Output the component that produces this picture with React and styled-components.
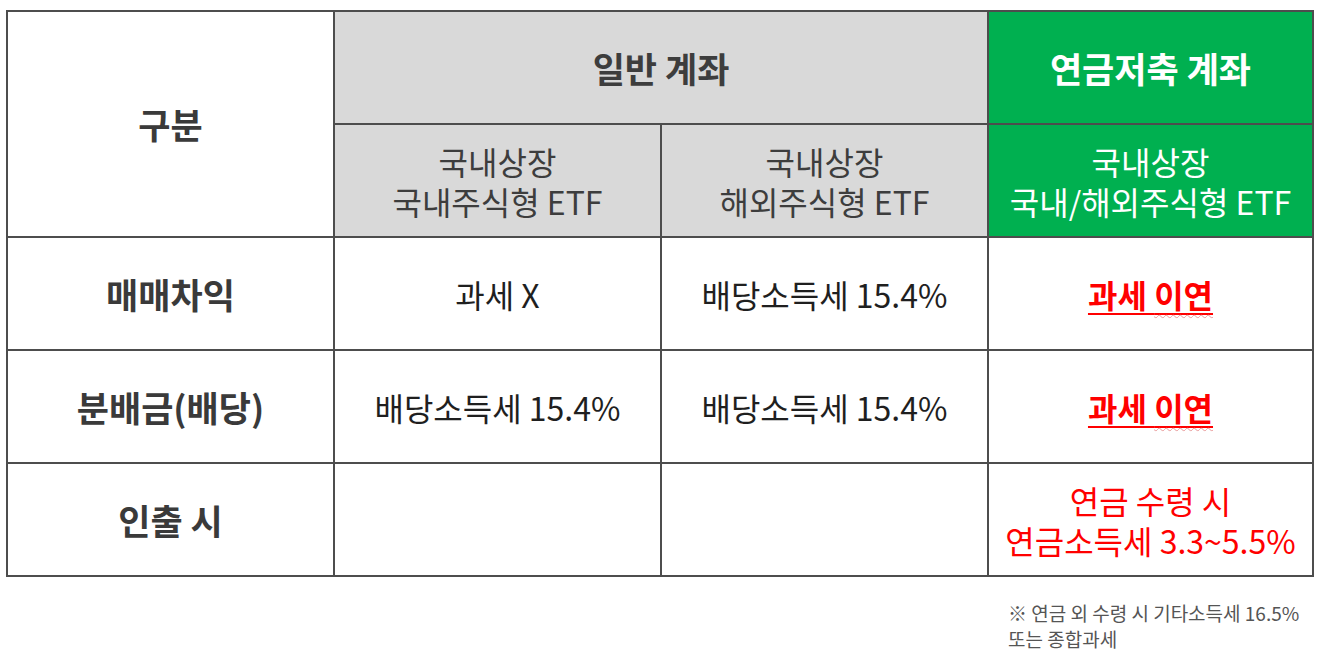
import React from 'react';
import styled, { createGlobalStyle } from 'styled-components';

const GlobalStyle = createGlobalStyle`
  body {
    margin: 0;
    background: #ffffff;
    font-family: "Noto Sans CJK KR", "Noto Sans", sans-serif;
  }
`;

const Page = styled.div`
  padding: 10px 0 0 6px;
  width: 1308px;
`;

const Grid = styled.div`
  display: grid;
  grid-template-columns: 325px 325px 325px 323px;
  grid-template-rows: repeat(5, 111px);
  gap: 2px;
  padding: 2px;
  background: #4d4d4d;
`;

const Cell = styled.div`
  display: flex;
  flex-direction: column;
  align-items: center;
  justify-content: center;
  text-align: center;
  background: ${p => (p.$tone === 'gray' ? '#d9d9d9' : p.$tone === 'green' ? '#00b050' : '#ffffff')};
  color: ${p => (p.$tone === 'green' ? '#ffffff' : p.$red ? '#ff0000' : p.$tone === 'gray' ? '#3d3d3d' : '#1f1f1f')};
  font-size: ${p => (p.$big ? '35px' : '32px')};
  font-weight: ${p => (p.$bold ? 700 : 400)};
  line-height: 40px;
  grid-row: ${p => p.$row || 'auto'};
  grid-column: ${p => p.$col || 'auto'};
`;

const RowHead = styled(Cell)`
  color: #3a3a3a;
  font-size: 35px;
  font-weight: 700;
`;

const Deferred = styled.span`
  color: #ff0000;
  font-weight: 700;
  font-size: 32px;
  text-decoration: underline;
  text-decoration-thickness: 2px;
  text-underline-offset: 5px;
`;

const Squiggle = styled.span`
  text-decoration: underline wavy #e89a9a;
  text-decoration-thickness: 1px;
  text-underline-offset: 6px;
`;

const Note = styled.div`
  display: flex;
  justify-content: flex-end;
  padding: 23px 0 0 0;
`;

const NoteText = styled.p`
  margin: 0;
  width: 306px;
  font-size: 19px;
  line-height: 26px;
  color: #555555;
`;

export default function App() {
  return (
    <>
      <GlobalStyle />
      <Page>
        <Grid>
          <RowHead $row="1 / 3" $col="1">구분</RowHead>
          <Cell $tone="gray" $bold $big $col="2 / 4">일반 계좌</Cell>
          <Cell $tone="green" $bold $big>연금저축 계좌</Cell>

          <Cell $tone="gray">국내상장<br />국내주식형 ETF</Cell>
          <Cell $tone="gray">국내상장<br />해외주식형 ETF</Cell>
          <Cell $tone="green">국내상장<br />국내/해외주식형 ETF</Cell>

          <RowHead>매매차익</RowHead>
          <Cell>과세 X</Cell>
          <Cell>배당소득세 15.4%</Cell>
          <Cell><Deferred>과세 <Squiggle>이연</Squiggle></Deferred></Cell>

          <RowHead>분배금(배당)</RowHead>
          <Cell>배당소득세 15.4%</Cell>
          <Cell>배당소득세 15.4%</Cell>
          <Cell><Deferred>과세 <Squiggle>이연</Squiggle></Deferred></Cell>

          <RowHead>인출 시</RowHead>
          <Cell />
          <Cell />
          <Cell $red>연금 수령 시<br />연금소득세 3.3~5.5%</Cell>
        </Grid>
        <Note>
          <NoteText>※ 연금 외 수령 시 기타소득세 16.5%<br />또는 종합과세</NoteText>
        </Note>
      </Page>
    </>
  );
}
